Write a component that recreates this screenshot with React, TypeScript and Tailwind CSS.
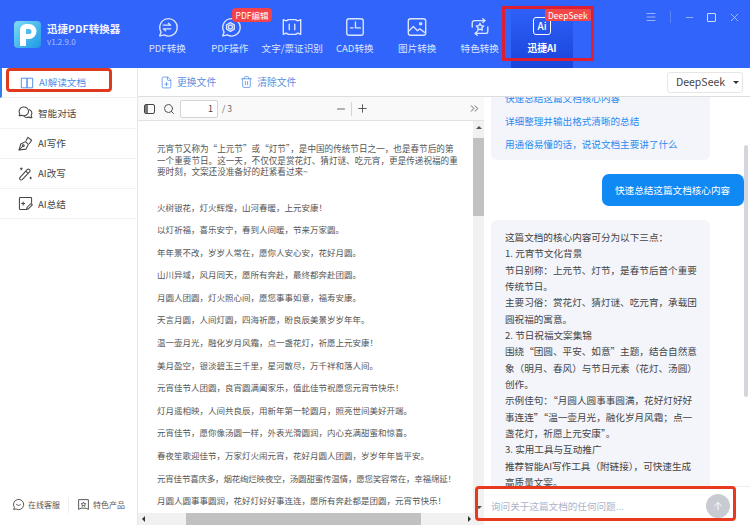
import { ChevronsRight, FilePlus, Minus, Plus, Search, Trash2, ArrowUp, X, Menu } from 'lucide-react';
import type { ReactNode } from 'react';

// source strings keep ascii punctuation, the page shows the full-width forms
const cjk = (s: string) =>
  s
    .replace(/,/g, '\uFF0C')
    .replace(/:/g, '\uFF1A')
    .replace(/!/g, '\uFF01')
    .replace(/;/g, '\uFF1B')
    .replace(/\(/g, '\uFF08')
    .replace(/\)/g, '\uFF09');

const navStroke = { fill: 'none', stroke: 'currentColor', strokeWidth: 1.5, strokeLinecap: 'round', strokeLinejoin: 'round' } as const;

function NavIcon({ children }: { children: ReactNode }) {
  return (
    <svg viewBox="0 0 24 24" className="h-[22px] w-[22px]" {...navStroke}>
      {children}
    </svg>
  );
}

const navItems = [
  {
    label: 'PDF转换',
    icon: (
      <NavIcon>
        <path d="M4 21.5 5.6 17.5A9.5 9.5 0 1 1 9 20.7c-1.7.6-3.5.9-5 .8Z" />
        <path d="M8 10h8l-2.5-2.2M16 14H8l2.5 2.2" />
      </NavIcon>
    ),
  },
  {
    label: 'PDF操作',
    badge: 'PDF编辑',
    icon: (
      <NavIcon>
        <path d="M4 21.5 5.6 17.5A9.5 9.5 0 1 1 9 20.7c-1.7.6-3.5.9-5 .8Z" />
        <circle cx="12.5" cy="12" r="2.2" />
        <path d="M12.5 7.2 16.7 9.6v4.8l-4.2 2.4-4.2-2.4V9.6Z" />
      </NavIcon>
    ),
  },
  {
    label: '文字/票证识别',
    icon: (
      <NavIcon>
        <path d="M2.5 4c3 1.5 3.5 1.5 5.5 0h8c2 1.5 2.5 1.5 5.5 0v16c-3-1.5-3.5-1.5-5.5 0H8c-2-1.5-2.5-1.5-5.5 0Z" />
        <path d="M9 9v6M15 9v6" />
      </NavIcon>
    ),
  },
  {
    label: 'CAD转换',
    icon: (
      <NavIcon>
        <rect x="3" y="3" width="18" height="18" rx="2.5" />
        <path d="M12.5 6.5v6.5H18M7 13h3" />
      </NavIcon>
    ),
  },
  {
    label: '图片转换',
    icon: (
      <NavIcon>
        <rect x="2.5" y="3" width="19" height="18" rx="2.5" />
        <circle cx="16" cy="8.5" r="1.2" />
        <path d="m3 16.5 5-5 4.5 4.5 2.5-2 5.5 4" />
      </NavIcon>
    ),
  },
  {
    label: '特色转换',
    icon: (
      <NavIcon>
        <path d="M17 5H6a2.5 2.5 0 0 0-2.5 2.5V12M15 3l2.5 2L15 7M7 19h11a2.5 2.5 0 0 0 2.5-2.5V12M9 17l-2.5 2L9 21" />
        <path d="m12 8 1.2 2.5 2.8.4-2 1.9.5 2.7-2.5-1.3-2.5 1.3.5-2.7-2-1.9 2.8-.4Z" />
      </NavIcon>
    ),
  },
];

const sideItems = [
  {
    label: 'AI解读文档',
    active: true,
    icon: (
      <svg viewBox="0 0 16 16" className="h-[14px] w-[14px]" fill="none" stroke="currentColor" strokeWidth="1.1">
        <path d="M1.5 2.5h6.5v11H1.5ZM8 2.5h6.5v11H8Z" />
      </svg>
    ),
  },
  {
    label: '智能对话',
    icon: (
      <svg viewBox="0 0 16 16" className="h-[15px] w-[15px]" fill="none" stroke="currentColor" strokeWidth="1.1" strokeLinejoin="round">
        <path d="M1.2 11.5 2 9.3A5 4.7 0 1 1 4 11c-.9.4-1.9.6-2.8.5Z" />
        <path d="M11.6 4.7A4 4 0 0 1 14 11l.8 2.6c-1 .1-2.2-.2-3-.8A5 5 0 0 1 6 11.5" />
      </svg>
    ),
  },
  {
    label: 'AI写作',
    icon: (
      <svg viewBox="0 0 16 16" className="h-[15px] w-[15px]" fill="none" stroke="currentColor" strokeWidth="1.1" strokeLinejoin="round">
        <path d="M1 15 3 8.5l5-2.5 3 3-2.5 5Z" />
        <path d="m1 15 3.8-3.8M8.5 5l2-3.5 4 3-2.5 4" />
        <circle cx="5.6" cy="10.3" r="1" />
      </svg>
    ),
  },
  {
    label: 'AI改写',
    icon: (
      <svg viewBox="0 0 16 16" className="h-[15px] w-[15px]" fill="none" stroke="currentColor" strokeWidth="1.1" strokeLinejoin="round">
        <path d="m2 12.3 7.8-8.5a1.7 1.7 0 0 1 2.5 2.4l-7.8 8.3a1.7 1.7 0 0 1-2.5-2.2ZM8.3 5.5l2.4 2.4" />
        <path d="M3.5 1.5v3M2 3h3M13.5 11.5v2.5M12.3 12.8h2.4" />
      </svg>
    ),
  },
  {
    label: 'AI总结',
    icon: (
      <svg viewBox="0 0 16 16" className="h-[15px] w-[15px]" fill="none" stroke="currentColor" strokeWidth="1.1" strokeLinejoin="round">
        <path d="M9 14.5H2.5a1 1 0 0 1-1-1v-11a1 1 0 0 1 1-1h11a1 1 0 0 1 1 1V8" />
        <path d="M5.5 6v4M3.5 8h4M9 14.5l.8-2.5 4-4 1.5 1.5-4 4Z" />
      </svg>
    ),
  },
];

const intro = [
  '元宵节又称为“上元节”或“灯节”,是中国的传统节日之一,也是春节后的第',
  '一个重要节日。这一天,不仅仅是赏花灯、猜灯谜、吃元宵,更是传递祝福的重',
  '要时刻,文案还没准备好的赶紧看过来~',
].map(cjk);

const paragraphs = [
  '火树银花,灯火辉煌,山河春暖,上元安康!',
  '以灯祈福,喜乐安宁,春到人间暖,节来万家圆。',
  '年年景不改,岁岁人常在,愿你人安心安,花好月圆。',
  '山川异域,风月同天,愿所有奔赴,最终都奔赴团圆。',
  '月圆人团圆,灯火照心间,愿您事事如意,福寿安康。',
  '天言月圆,人间灯圆,四海祈愿,盼良辰美景岁岁年年。',
  '温一壶月光,融化岁月风霜,点一盏花灯,祈愿上元安康!',
  '美月盈空,银淡碧玉三千里,星河散尽,万千祥和落人间。',
  '元宵佳节人团圆,良宵圆满阖家乐,值此佳节祝愿您元宵节快乐!',
  '灯月遥相映,人间共良辰,用新年第一轮圆月,照亮世间美好开端。',
  '元宵佳节,愿你像汤圆一样,外表光滑圆润,内心充满甜蜜和惊喜。',
  '春夜笙歌迎佳节,万家灯火闹元宵,花好月圆人团圆,岁岁年年皆平安。',
  '元宵佳节喜庆多,烟花绚烂映夜空,汤圆甜蜜传温情,愿您笑容常在,幸福绵延!',
  '月圆人圆事事圆润,花好灯好好事连连,愿所有奔赴都是团圆,元宵节快乐!',
].map(cjk);

const suggestions = ['快速总结这篇文档核心内容', '详细整理并输出格式清晰的总结', '用通俗易懂的话,说说文档主要讲了什么'].map(cjk);

const answer = [
  '这篇文档的核心内容可分为以下三点:',
  '1. 元宵节文化背景',
  '节日别称:上元节、灯节,是春节后首个重要',
  '传统节日。',
  '主要习俗:赏花灯、猜灯谜、吃元宵,承载团',
  '圆祝福的寓意。',
  '2. 节日祝福文案集锦',
  '围绕“团圆、平安、如意”主题,结合自然意',
  '象(明月、春风)与节日元素(花灯、汤圆)',
  '创作。',
  '示例佳句:“月圆人圆事事圆满,花好灯好好',
  '事连连”“温一壶月光,融化岁月风霜;点一',
  '盏花灯,祈愿上元安康”。',
  '3. 实用工具与互动推广',
  '推荐智能AI写作工具(附链接),可快速生成',
  '高质量文案。',
].map(cjk);

function Header() {
  return (
    <header className="flex h-[68px] shrink-0 bg-[#3164fb] text-white">
      <div className="flex w-[136px] shrink-0 items-center pl-[14px]">
        <svg viewBox="0 0 27 27" className="h-[27px] w-[27px]">
          <defs>
            <linearGradient id="logoBg" x1="0" y1="0" x2="1" y2="1">
              <stop offset="0" stopColor="#7fdcf5" />
              <stop offset="1" stopColor="#1c97e6" />
            </linearGradient>
          </defs>
          <rect width="27" height="27" rx="4" fill="url(#logoBg)" />
          <path fillRule="evenodd" fill="#ffffff" d="M6 25V9a6 6 0 0 1 6-6h3a7.5 7.5 0 0 1 0 15h-3v7ZM12 8v5h3a2.5 2.5 0 0 0 0-5Z" />
        </svg>
        <div className="ml-[6px]">
          <div className="text-[10.5px] leading-[14px] font-bold text-[#eef3ff]">迅捷PDF转换器</div>
          <div className="mt-[1px] text-[8px] leading-[10px] text-[#a9c0ff]">v1.2.9.0</div>
        </div>
      </div>
      <nav className="flex">
        {navItems.map((item) => (
          <div key={item.label} className="relative flex w-[62.5px] flex-col items-center pt-[16px] text-[#dbe5ff]">
            {item.icon}
            <div className="mt-[3px] text-[9.6px] leading-[14px] whitespace-nowrap">{item.label}</div>
            {item.badge && (
              <span className="absolute top-[8px] left-[33px] rounded-[4px] bg-[#f4424a] px-[4px] text-[8.5px] leading-[14px] whitespace-nowrap text-white">
                {item.badge}
              </span>
            )}
          </div>
        ))}
        <div className="relative flex w-[62px] flex-col items-center bg-gradient-to-b from-[#3164fb] to-[#1a44dc] pt-[17px]">
          <div className="flex h-[18px] w-[18px] items-center justify-center rounded-[3px] border-[1.5px] border-white text-[10px] leading-none font-medium">
            Ai
          </div>
          <div className="mt-[6px] text-[9.8px] leading-[14px] font-bold">迅捷AI</div>
          <span className="absolute top-[9px] left-[34px] rounded-[2px] bg-[#f04848] px-[3px] text-[8.5px] leading-[12px] whitespace-nowrap">
            DeepSeek
          </span>
        </div>
      </nav>
      <div className="ml-auto flex h-[34px] items-center pr-[9px] text-[#cfdcff]">
        <Menu className="h-[12px] w-[12px]" strokeWidth={1.3} />
        <span className="mx-[13px] h-[12px] w-px bg-[#5a84fb]" />
        <Minus className="h-[11px] w-[11px]" strokeWidth={1.4} />
        <span className="ml-[12px] h-[9px] w-[9px] rounded-[1px] border-[1.3px] border-[#cfdcff]" />
        <X className="ml-[12px] h-[13px] w-[13px]" strokeWidth={1.3} />
      </div>
    </header>
  );
}

function Sidebar() {
  return (
    <aside className="flex w-[137px] shrink-0 flex-col bg-white">
      {sideItems.map((item) => (
        <div
          key={item.label}
          className={`flex h-[30.3px] items-center gap-[5px] border-b border-[#f2f2f2] pl-[18px] text-[9.6px] ${
            item.active ? 'border-l-2 border-l-[#2f7ff0] pl-[16px] text-[#4f8fe6]' : 'text-[#444444]'
          }`}
        >
          {item.icon}
          <span>{item.label}</span>
        </div>
      ))}
      <div className="mt-auto flex h-[40px] items-center pb-[1px] pl-[12px] text-[8px] text-[#555555]">
        <svg viewBox="0 0 16 16" className="h-[13px] w-[13px]" fill="none" stroke="currentColor" strokeWidth="1.2" strokeLinecap="round">
          <path d="M2.3 13.7 3 11.7A6.3 6.3 0 1 1 5 13.5c-.9.3-1.8.4-2.7.2Z" />
          <path d="M5.5 8c.8 1.6 4 1.6 5 0" />
        </svg>
        <span className="ml-[3px]">在线客服</span>
        <span className="mx-[8px] h-[16px] w-px bg-[#eeeeee]" />
        <svg viewBox="0 0 16 16" className="h-[13px] w-[13px]" fill="none" stroke="currentColor" strokeWidth="1.2" strokeLinejoin="round">
          <path d="M2 2h12v12l-3-1.5H5L2 14Z" />
          <path d="m8 5 .9 1.8 1.9.2-1.4 1.3.4 1.9L8 9.3l-1.8.9.4-1.9L5.2 7l1.9-.2Z" />
        </svg>
        <span className="ml-[3px]">特色产品</span>
      </div>
    </aside>
  );
}

function Toolbar() {
  return (
    <div className="flex h-[29px] shrink-0 items-center border-b border-b-[#dddddd] pr-[7px] pl-[22px] text-[9.8px] text-[#5b8fe0]">
      <FilePlus className="h-[15px] w-[13px] text-[#3f83e8]" strokeWidth={1.3} />
      <span className="ml-[4px]">更换文件</span>
      <Trash2 className="ml-[24px] h-[14px] w-[13px] text-[#3f83e8]" strokeWidth={1.3} />
      <span className="ml-[4px]">清除文件</span>
      <div className="ml-auto flex h-[21px] w-[76px] items-center rounded-[3px] border border-[#e6e6e6] pl-[8px] text-[10.5px] text-[#444444]">
        DeepSeek
        <span className="ml-[8px] h-0 w-0 border-x-[3px] border-t-[3px] border-x-transparent border-t-[#333333]" />
      </div>
    </div>
  );
}

function PdfViewer() {
  return (
    <section className="flex w-[346px] shrink-0 flex-col overflow-hidden">
      <div className="flex h-[24px] shrink-0 items-center border-b border-[#e2e2e2] bg-[#f9f9fa] pl-[6px] text-[#444444]">
        <span className="flex h-[10px] w-[11px] rounded-[2px] border-[1.2px] border-[#444444]">
          <span className="w-[3px] bg-[#777777]" />
        </span>
        <Search className="ml-[8px] h-[12px] w-[12px]" strokeWidth={1.8} />
        <span className="ml-[5px] flex h-[18px] w-[38px] items-center justify-end rounded-[2px] border border-[#d5d5d5] bg-white pr-[4px] text-[9px]">
          1
        </span>
        <span className="ml-[4px] text-[8.5px] text-[#666666]">/ 3</span>
        <Minus className="ml-[103px] h-[12px] w-[12px]" strokeWidth={1.6} />
        <span className="mx-[4px] h-[14px] w-px bg-[#d5d5d5]" />
        <Plus className="h-[13px] w-[13px]" strokeWidth={1.6} />
        <ChevronsRight className="ml-[99px] h-[13px] w-[13px]" strokeWidth={1.5} />
      </div>
      <div className="flex min-h-0 flex-1">
        <div className="min-w-0 flex-1 overflow-hidden bg-white pt-[22px] pr-[13px] pl-[19px] text-[8.5px] text-[#555555]">
          {intro.map((line) => (
            <p key={line} className="text-[8.6px] leading-[11.5px] whitespace-nowrap">
              {line}
            </p>
          ))}
          <div className="mt-[22px]">
            {paragraphs.map((line) => (
              <p key={line} className={`h-[22.6px] leading-[14px] whitespace-nowrap ${line.length > 35 ? 'tracking-[-0.2px]' : ''}`}>
                {line}
              </p>
            ))}
          </div>
        </div>
        <div className="flex w-[11px] shrink-0 flex-col items-center bg-[#f1f1f1]">
          <span className="mt-[5px] h-0 w-0 border-x-[3px] border-b-[3px] border-x-transparent border-b-[#555555]" />
          <span className="mt-[9px] h-[78px] w-full bg-[#c1c1c1]" />
          <span className="mt-auto mb-[4px] h-0 w-0 border-x-[3px] border-t-[3px] border-x-transparent border-t-[#555555]" />
        </div>
      </div>
      <div className="flex h-[12px] shrink-0 items-center bg-[#f1f1f1]">
        <span className="ml-[4px] h-0 w-0 border-y-[3px] border-r-[3px] border-y-transparent border-r-[#333333]" />
        <span className="ml-[41px] h-full w-[235px] bg-[#c1c1c1]" />
        <span className="ml-[47px] h-0 w-0 border-y-[3px] border-l-[3px] border-y-transparent border-l-[#333333]" />
      </div>
    </section>
  );
}

function Chat() {
  return (
    <section className="relative flex min-w-0 flex-1 flex-col overflow-hidden bg-white">
      <div className="min-h-0 flex-1 overflow-hidden pr-[6px] pl-[7px] text-[9.6px]">
        <div className="-mt-[6px] w-[219px] rounded-[6px] bg-[#f3f5fb] px-[14px] pb-[9px] leading-[14px] whitespace-nowrap text-[#2a8cf0]">
          {suggestions.map((text) => (
            <p key={text} className="pb-[9px] last:pb-0">
              {text}
            </p>
          ))}
        </div>
        <div className="mt-[14px] flex justify-end">
          <div className="flex h-[32px] w-[142px] items-center rounded-[7px] bg-[#1189f5] pl-[13px] text-white">
            快速总结这篇文档核心内容
          </div>
        </div>
        <div className="mt-[14px] w-[219px] rounded-[6px] bg-[#f3f5fb] py-[9px] pl-[14px] leading-[16.35px] whitespace-nowrap text-[#444444]">
          {answer.map((text) => (
            <p key={text}>{text}</p>
          ))}
        </div>
      </div>
      <div className="flex h-[39px] shrink-0 items-center border-t border-[#eeeeee] bg-white pr-[20px] pl-[7px] text-[9.6px] text-[#aab4cc]">
        询问关于这篇文档的任何问题...
        <span className="ml-auto flex h-[24px] w-[24px] items-center justify-center rounded-full bg-[#c9cbd3] text-white">
          <ArrowUp className="h-[12px] w-[12px]" strokeWidth={2} />
        </span>
      </div>
      {/* chat scrollbar thumb */}
      <span className="absolute top-[48px] right-[2px] h-[252px] w-[4px] rounded-full bg-[#d4d6dd]" />
    </section>
  );
}

export default function App() {
  return (
    <div className="relative flex h-[525px] w-[750px] flex-col overflow-hidden bg-white font-['Noto_Sans_CJK_SC','Liberation_Sans',sans-serif]">
      <Header />
      <div className="flex min-h-0 flex-1">
        <Sidebar />
        <main className="flex min-w-0 flex-1 flex-col border-l border-[#e6e6e6]">
          <Toolbar />
          <div className="flex min-h-0 flex-1">
            <PdfViewer />
            <Chat />
          </div>
        </main>
      </div>
      {/* red annotation boxes drawn over the screenshot */}
      <div className="pointer-events-none absolute top-[6px] left-[502px] h-[55px] w-[92px] border-[3px] border-[#dc1f33]" />
      <div className="pointer-events-none absolute top-[68px] left-[6px] h-[24px] w-[106px] rounded-[4px] border-[3px] border-[#e03a1e]" />
      <div className="pointer-events-none absolute top-[486px] left-[475px] h-[35px] w-[261px] rounded-[4px] border-[3px] border-[#e8391f]" />
    </div>
  );
}
